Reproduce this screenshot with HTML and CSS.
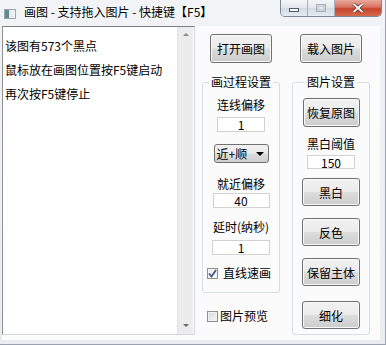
FILE: index.html
```html
<!DOCTYPE html>
<html lang="zh-CN">
  <head>
    <meta charset="UTF-8" />
    <title>画图 - 支持拖入图片 - 快捷键【F5】</title>
    <link rel="stylesheet" href="styles.css">
  </head>
  <body>
    <div class="window">
      <!-- 標題列 -->
      <div class="titlebar">
        <span class="app-icon"></span>
        <span class="title">画图 - 支持拖入图片 - 快捷键【F5】</span>
        <div class="caption-btns">
          <span class="cap cap-min">
            <svg width="10" height="4" viewBox="0 0 10 4"><rect x="0.5" y="0.5" width="9" height="3" fill="#fff" stroke="#555d6a"/></svg>
          </span>
          <span class="cap cap-max">
            <svg width="10" height="8" viewBox="0 0 10 8"><rect x="0.5" y="0.5" width="9" height="7" fill="none" stroke="#a9b1bb"/><rect x="2" y="2" width="6" height="4" fill="#e4e8ee" stroke="#b9c0c9"/></svg>
          </span>
          <span class="cap cap-close">
            <svg width="12" height="10" viewBox="0 0 12 10"><path d="M1.5 1 L10.5 9 M10.5 1 L1.5 9" stroke="#4a1a14" stroke-width="3.2"/><path d="M1.5 1 L10.5 9 M10.5 1 L1.5 9" stroke="#fff" stroke-width="2"/></svg>
          </span>
        </div>
      </div>

      <div class="client">
        <!-- 訊息框 -->
        <div class="log">
          <div class="log-text">
            <p>该图有573个黑点</p>
            <p>鼠标放在画图位置按F5键启动</p>
            <p>再次按F5键停止</p>
          </div>
          <div class="scrollbar">
            <span class="arrow arrow-up"></span>
            <span class="arrow arrow-down"></span>
          </div>
        </div>

        <div class="controls">
          <div class="col">
            <button class="btn btn-top">打开画图</button>
            <fieldset class="group">
              <legend>画过程设置</legend>
              <div class="group-body group-draw">
                <div class="label">连线偏移</div>
                <input class="field w48" type="text" value="1" />
                <div class="select"><span>近+顺</span><span class="caret"></span></div>
                <div class="label">就近偏移</div>
                <input class="field w57" type="text" value="40" />
                <div class="label">延时(纳秒)</div>
                <input class="field w58" type="text" value="1" />
                <label class="check">
                  <span class="box checked">
                    <svg width="9" height="9" viewBox="0 0 9 9"><path d="M1 4.5 L3.5 7.5 L8 1" fill="none" stroke="#3f5a8f" stroke-width="1.8"/></svg>
                  </span>直线速画
                </label>
              </div>
            </fieldset>
            <label class="check check-preview"><span class="box"></span>图片预览</label>
          </div>

          <div class="col">
            <button class="btn btn-top">载入图片</button>
            <fieldset class="group">
              <legend>图片设置</legend>
              <div class="group-body group-image">
                <button class="btn btn-restore">恢复原图</button>
                <div class="label">黑白阈值</div>
                <input class="field w48 h14" type="text" value="150" />
                <button class="btn btn-side">黑白</button>
                <button class="btn btn-side">反色</button>
                <button class="btn btn-side">保留主体</button>
                <button class="btn btn-side btn-last">细化</button>
              </div>
            </fieldset>
          </div>
        </div>
      </div>
    </div>
  </body>
</html>
```

FILE: styles.css
```css
* {
  box-sizing: border-box;
}

body {
  margin: 0;
  width: 386px;
  height: 345px;
  overflow: hidden;
  font-family: "Noto Sans CJK SC", "Liberation Sans", sans-serif;
  font-size: 12px;
  color: #000;
}

.window {
  width: 386px;
  height: 345px;
  background: linear-gradient(180deg, #f1f3f6 0%, #e9edf2 100%);
  border-right: 1px solid #9aa3ad;
  border-bottom: 1px solid #9aa3ad;
  padding-left: 2px;
}

/* title bar */
.titlebar {
  height: 26px;
  display: flex;
  align-items: center;
}

.app-icon {
  width: 12px;
  height: 10px;
  margin-left: 2px;
  margin-top: 1px;
  border: 1px solid #9aa5ad;
  background: linear-gradient(90deg, #5e8c8c 0%, #5e8c8c 40%, #dfe6ea 41%, #f4f6f8 100%);
}

.title {
  margin-left: 8px;
  line-height: 16px;
  margin-top: -2px;
  text-shadow: 0 0 6px #fff, 0 0 4px #fff;
}

.caption-btns {
  align-self: flex-start;
  margin-left: auto;
  margin-right: 3px;
  display: flex;
  height: 17px;
  border: 1px solid #7d8896;
  border-top: none;
  border-radius: 0 0 5px 5px;
  overflow: hidden;
}

.cap {
  display: flex;
  align-items: center;
  justify-content: center;
  height: 100%;
}

.cap-min,
.cap-max {
  width: 27px;
  background: linear-gradient(180deg, #f3f5f8 0%, #e2e7ed 50%, #d3dae3 51%, #e6ebf1 100%);
  border-right: 1px solid #a6b0bc;
}

.cap-min svg {
  margin-top: 4px;
}

.cap-close {
  width: 46px;
  background: linear-gradient(180deg, #e9a99c 0%, #d8715f 45%, #c7432c 55%, #d46a4c 100%);
}

/* client area */
.client {
  width: 378px;
  height: 314px;
  background: #fbfbfb;
  display: flex;
  align-items: flex-start;
}

.log {
  width: 193px;
  height: 309px;
  background: #fff;
  border: 1px solid #d3d6da;
  border-top-color: #7d7f83;
  border-left-color: #8e9094;
  display: flex;
}

.log-text {
  flex: 1;
  padding: 7px 0 0 2px;
}

.log-text p {
  margin: 0;
  line-height: 24px;
  white-space: nowrap;
}

.scrollbar {
  width: 16px;
  height: 100%;
  margin-right: 1px;
  background: #ececec;
  border-left: 1px solid #e2e2e2;
  display: flex;
  flex-direction: column;
  justify-content: space-between;
  align-items: center;
  padding: 6px 0 7px;
}

.arrow {
  width: 0;
  height: 0;
  border-left: 3px solid transparent;
  border-right: 3px solid transparent;
}

.arrow-up {
  border-bottom: 3px solid #8a8a8a;
}

.arrow-down {
  border-top: 3px solid #6a6a6a;
}

/* right side controls */
.controls {
  display: flex;
  gap: 12px;
  padding: 8px 0 0 7px;
}

.col {
  width: 78px;
  display: flex;
  flex-direction: column;
  align-items: center;
}

.btn {
  font-family: inherit;
  font-size: 12px;
  color: #000;
  padding: 0;
  border: 1px solid #707070;
  border-radius: 3px;
  background: linear-gradient(180deg, #f2f2f2 0%, #ebebeb 48%, #dcdcdc 52%, #cdcdcd 100%);
  box-shadow: inset 0 0 0 1px #f8f8f8;
}

.btn-top {
  width: 62px;
  height: 29px;
}

.btn-restore {
  width: 57px;
  height: 29px;
  margin-top: 8px;
}

.btn-side {
  width: 58px;
  height: 28px;
  margin-top: 12px;
}

.group-image .label + .field + .btn-side {
  margin-top: 9px;
}

.btn-last {
  margin-top: 15px;
}

.group {
  width: 78px;
  margin: 11px 0 0;
  padding: 0;
  border: 1px solid #d5dce2;
  border-radius: 3px;
  box-shadow: inset 1px 1px 0 #fff;
}

.group legend {
  margin: 0 auto;
  padding: 0 2px;
  line-height: 16px;
}

.group-body {
  display: flex;
  flex-direction: column;
  align-items: center;
}

.group-draw {
  padding-bottom: 11px;
}

.group-image {
  padding-bottom: 5px;
}

.label {
  line-height: 16px;
  white-space: nowrap;
}

.group-draw .label {
  margin-top: 11px;
}

.group-draw .label:first-child {
  margin-top: 7px;
}

.group-draw .field {
  margin-top: 4px;
}

.group-draw .field.w57 {
  margin-top: 1px;
}

.group-draw .field.w58 {
  margin-top: 5px;
}

.group-draw .label:nth-of-type(3) {
  margin-top: 13px;
}

.group-image .label {
  margin-top: 9px;
}

.group-image .field {
  margin-top: 3px;
}

.field {
  height: 15px;
  padding: 0;
  border: 1px solid #d2d2d2;
  background: #fff;
  font-family: inherit;
  font-size: 12px;
  line-height: 13px;
  text-align: center;
  color: #000;
}

.w48 { width: 48px; }
.w57 { width: 57px; }
.w58 { width: 58px; }
.h14 { height: 14px; }

.select {
  width: 55px;
  height: 19px;
  margin-top: 12px;
  border: 1px solid #707070;
  border-radius: 3px;
  background: linear-gradient(180deg, #f2f2f2 0%, #ebebeb 48%, #dcdcdc 52%, #cfcfcf 100%);
  display: flex;
  align-items: center;
  padding-left: 2px;
  line-height: 16px;
}

.caret {
  margin-left: auto;
  margin-right: 4px;
  width: 0;
  height: 0;
  border-left: 4px solid transparent;
  border-right: 4px solid transparent;
  border-top: 4px solid #000;
}

.check {
  display: flex;
  align-items: center;
  align-self: flex-start;
  height: 16px;
  line-height: 16px;
  gap: 5px;
  white-space: nowrap;
}

.group-draw .check {
  margin: 10px 0 0 4px;
}

.check-preview {
  margin: 15px 0 0 5px;
  gap: 2px;
}

.box {
  width: 11px;
  height: 11px;
  border: 1px solid #8f8f8f;
  background: linear-gradient(135deg, #dcdcdc 0%, #f4f4f4 100%);
  box-shadow: inset 0 0 0 1px #f2f2f2;
  display: flex;
  align-items: center;
  justify-content: center;
}

.box.checked {
  background: linear-gradient(135deg, #e6e9ee 0%, #fbfbfc 100%);
}
```
